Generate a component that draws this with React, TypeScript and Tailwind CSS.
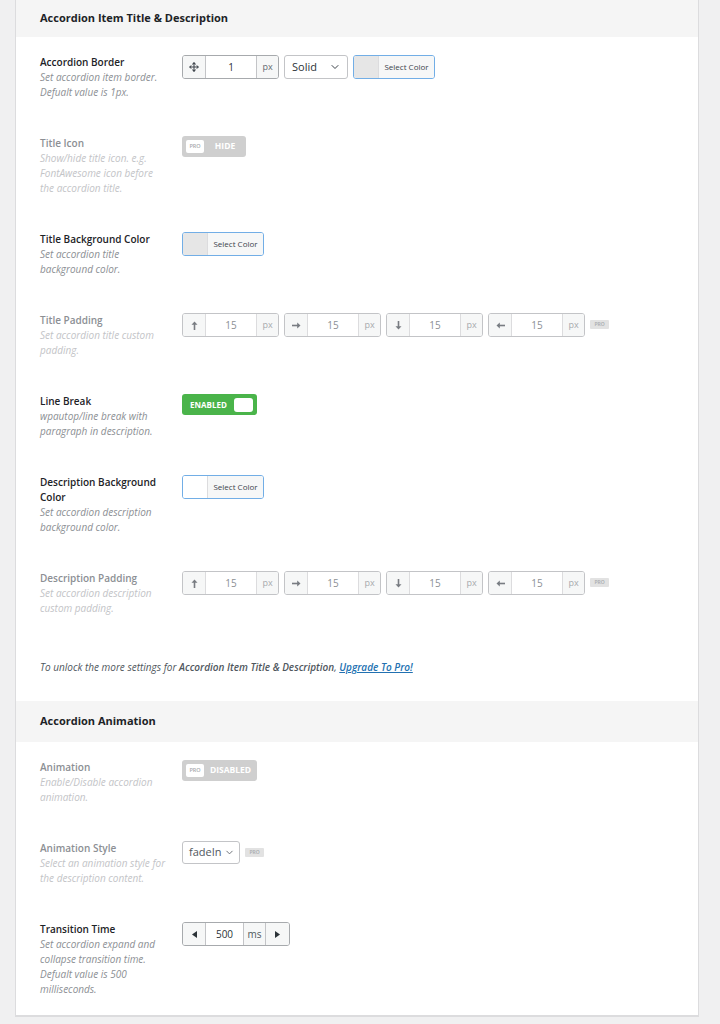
import { ChevronDown, Move } from "lucide-react";
import type { ReactNode } from "react";

function Row({
	label,
	desc,
	pro,
	children,
}: {
	label: string;
	desc: string;
	pro?: boolean;
	children: ReactNode;
}) {
	return (
		<div className="flex pt-[18px] pb-[18px]">
			<div className="w-[142px] shrink-0 pr-[14px]">
				<div
					className={
						pro
							? "text-[10px] font-semibold leading-[15px] text-[#8c8f94]"
							: "text-[10px] font-semibold leading-[15px] text-[#1d2327]"
					}
				>
					{label}
				</div>
				<div
					className={
						pro
							? "text-[10px] italic leading-[15px] text-[#c3c4c7]"
							: "text-[10px] italic leading-[15px] text-[#8c8f94]"
					}
				>
					{desc}
				</div>
			</div>
			<div className="flex items-start gap-[5px]">{children}</div>
		</div>
	);
}

function SectionHeader({ title, first }: { title: string; first?: boolean }) {
	return (
		<div
			className={
				first
					? "flex h-[37px] items-center bg-[#f5f5f5] pl-[24px] text-[11px] font-bold text-[#1d2327]"
					: "flex h-[41px] items-center bg-[#f5f5f5] pl-[24px] text-[11px] font-bold text-[#1d2327]"
			}
		>
			{title}
		</div>
	);
}

function ProBadge() {
	return (
		<span className="mt-[7px] flex h-[9px] w-[19px] items-center justify-center rounded-[1px] bg-[#e2e2e2] text-[5px] font-semibold text-[#a7aaad]">
			PRO
		</span>
	);
}

function ColorButton({ swatch }: { swatch: "gray" | "white" }) {
	return (
		<div className="flex h-[24px] w-[82px] overflow-hidden rounded-[3px] border border-[#72aee6]">
			<div
				className={
					swatch === "gray"
						? "w-[25px] border-r border-[#dcdcde] bg-[#e6e6e6]"
						: "w-[25px] border-r border-[#dcdcde] bg-white"
				}
			/>
			<div className="flex flex-1 items-center justify-center bg-[#f6f7f7] text-[8px] font-normal text-[#3c434a]">
				Select Color
			</div>
		</div>
	);
}

// long thin arrow, drawn pointing up then rotated
function LongArrow({ rotate }: { rotate: string }) {
	return (
		<svg width="9" height="9" viewBox="0 0 9 9" className={rotate}>
			<rect x="3.7" y="3" width="1.6" height="6" fill="#787c82" />
			<polygon points="1.5,3.8 4.5,0.5 7.5,3.8" fill="#787c82" />
		</svg>
	);
}

function PaddingBox({ icon }: { icon: ReactNode }) {
	return (
		<div className="flex h-[24px] w-[97px] overflow-hidden rounded-[3px] border border-[#c3c4c7]">
			<div className="flex w-[23px] items-center justify-center border-r border-[#dcdcde] bg-[#f6f7f7]">
				{icon}
			</div>
			<div className="flex flex-1 items-center justify-center bg-white text-[10px] text-[#8c8f94]">15</div>
			<div className="flex w-[22px] items-center justify-center border-l border-[#dcdcde] bg-[#f6f7f7] text-[9px] text-[#a7aaad]">
				px
			</div>
		</div>
	);
}

function PaddingRow() {
	return (
		<>
			<PaddingBox icon={<LongArrow rotate="rotate-0" />} />
			<PaddingBox icon={<LongArrow rotate="rotate-90" />} />
			<PaddingBox icon={<LongArrow rotate="rotate-180" />} />
			<PaddingBox icon={<LongArrow rotate="-rotate-90" />} />
			<ProBadge />
		</>
	);
}

function ProToggle({ text, width }: { text: string; width: string }) {
	return (
		<div className={`flex h-[21px] items-center rounded-[3px] bg-[#cfcfcf] pl-[4px] ${width}`}>
			<span className="flex h-[13px] w-[18px] items-center justify-center rounded-[2px] bg-white text-[5.5px] font-semibold text-[#a7aaad]">
				PRO
			</span>
			<span className="flex-1 text-center text-[8.5px] font-bold text-white">{text}</span>
		</div>
	);
}

export default function App() {
	return (
		<div className="min-h-[1024px] bg-[#f0f0f1] font-['Open_Sans',sans-serif]">
			<div className="ml-[15px] w-[684px] border-x border-b-2 border-[#dcdcde] bg-white">
				<SectionHeader title="Accordion Item Title & Description" first />
				<div className="pl-[24px]">
					<Row label="Accordion Border" desc="Set accordion item border. Defualt value is 1px.">
						<div className="flex h-[24px] w-[97px] overflow-hidden rounded-[3px] border border-[#a7aaad]">
							<div className="flex w-[23px] items-center justify-center border-r border-[#c3c4c7] bg-[#f6f7f7] text-[#3c434a]">
								<Move size={10} strokeWidth={2.5} />
							</div>
							<div className="flex flex-1 items-center justify-center bg-white text-[10px] text-[#2c3338]">1</div>
							<div className="flex w-[22px] items-center justify-center border-l border-[#c3c4c7] bg-[#f6f7f7] text-[9px] text-[#646970]">
								px
							</div>
						</div>
						<div className="flex h-[24px] w-[64px] items-center justify-between rounded-[3px] border border-[#c3c4c7] bg-white pr-[6px] pl-[7px] text-[11px] text-[#2c3338]">
							Solid
							<ChevronDown size={12} strokeWidth={2} className="text-[#3c434a]" />
						</div>
						<ColorButton swatch="gray" />
					</Row>
					<Row label="Title Icon" desc="Show/hide title icon. e.g. FontAwesome icon before the accordion title." pro>
						<ProToggle text="HIDE" width="w-[64px]" />
					</Row>
					<Row label="Title Background Color" desc="Set accordion title background color.">
						<ColorButton swatch="gray" />
					</Row>
					<Row label="Title Padding" desc="Set accordion title custom padding." pro>
						<PaddingRow />
					</Row>
					<Row label="Line Break" desc="wpautop/line break with paragraph in description.">
						<div className="flex h-[21px] w-[75px] items-center justify-between rounded-[3px] bg-[#4ab44a] pr-[4px] pl-[8px]">
							<span className="text-[8px] font-bold text-white">ENABLED</span>
							<span className="h-[14px] w-[19px] rounded-[3px] bg-white" />
						</div>
					</Row>
					<Row label="Description Background Color" desc="Set accordion description background color.">
						<ColorButton swatch="white" />
					</Row>
					<Row label="Description Padding" desc="Set accordion description custom padding." pro>
						<PaddingRow />
					</Row>
					<p className="pt-[26px] pb-[26px] text-[10px] italic leading-[15px] text-[#50575e]">
						To unlock the more settings for{" "}
						<span className="font-semibold text-[#50575e]">Accordion Item Title &amp; Description</span>,{" "}
						<a className="font-semibold text-[#2271b1] underline">Upgrade To Pro!</a>
					</p>
				</div>
				<SectionHeader title="Accordion Animation" />
				<div className="pl-[24px]">
					<Row label="Animation" desc="Enable/Disable accordion animation." pro>
						<ProToggle text="DISABLED" width="w-[75px]" />
					</Row>
					<Row label="Animation Style" desc="Select an animation style for the description content." pro>
						<div className="flex h-[23px] w-[58px] items-center justify-between rounded-[3px] border border-[#c3c4c7] bg-white pr-[4px] pl-[6px] text-[11px] text-[#50575e]">
							fadeIn
							<ChevronDown size={11} strokeWidth={2} className="text-[#646970]" />
						</div>
						<ProBadge />
					</Row>
					<Row label="Transition Time" desc="Set accordion expand and collapse transition time. Defualt value is 500 milliseconds.">
						<div className="flex h-[24px] w-[108px] overflow-hidden rounded-[3px] border border-[#a7aaad]">
							<div className="flex w-[23px] items-center justify-center border-r border-[#c3c4c7] bg-[#f6f7f7]">
								<svg width="5" height="7" viewBox="0 0 5 7">
									<polygon points="5,0 0,3.5 5,7" fill="#2c3338" />
								</svg>
							</div>
							<div className="flex flex-1 items-center justify-center bg-white text-[10px] text-[#2c3338]">500</div>
							<div className="flex w-[23px] items-center justify-center border-x border-[#c3c4c7] bg-[#f6f7f7] text-[10px] text-[#50575e]">
								ms
							</div>
							<div className="flex w-[23px] items-center justify-center bg-[#f6f7f7]">
								<svg width="5" height="7" viewBox="0 0 5 7">
									<polygon points="0,0 5,3.5 0,7" fill="#2c3338" />
								</svg>
							</div>
						</div>
					</Row>
				</div>
			</div>
		</div>
	);
}
